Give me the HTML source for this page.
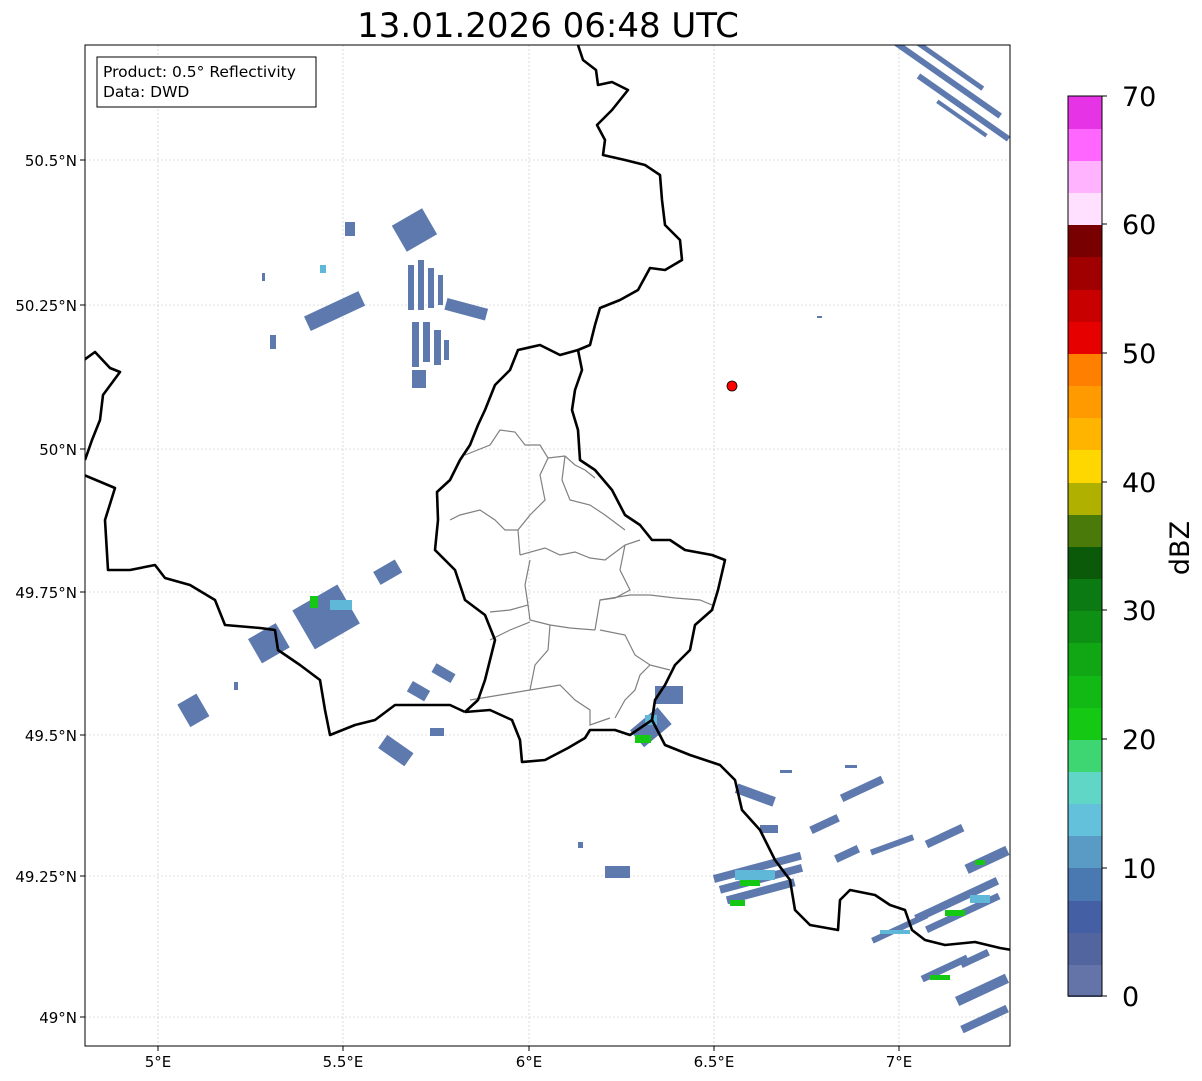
<!DOCTYPE html>
<html><head><meta charset="utf-8"><style>
html,body{margin:0;padding:0;background:#fff;width:1202px;height:1081px;overflow:hidden;font-family:"DejaVu Sans","Liberation Sans",sans-serif;}
</style></head><body>
<svg width="1202" height="1081" xmlns="http://www.w3.org/2000/svg" font-family="DejaVu Sans, Liberation Sans, sans-serif">
<rect width="1202" height="1081" fill="#fff"/>
<text x="548" y="37" font-size="34" text-anchor="middle" fill="#000">13.01.2026 06:48 UTC</text>
<defs><clipPath id="c"><rect x="85" y="45" width="925" height="1001"/></clipPath></defs>
<g clip-path="url(#c)">
<g stroke="#c0c0c0" stroke-width="0.6" stroke-dasharray="2,2">
<line x1="85" x2="1010" y1="160" y2="160"/><line x1="85" x2="1010" y1="305" y2="305"/><line x1="85" x2="1010" y1="449" y2="449"/><line x1="85" x2="1010" y1="592" y2="592"/><line x1="85" x2="1010" y1="735" y2="735"/><line x1="85" x2="1010" y1="876" y2="876"/><line x1="85" x2="1010" y1="1017" y2="1017"/>
<line y1="45" y2="1046" x1="158" x2="158"/><line y1="45" y2="1046" x1="343" x2="343"/><line y1="45" y2="1046" x1="529" x2="529"/><line y1="45" y2="1046" x1="714" x2="714"/><line y1="45" y2="1046" x1="899" x2="899"/>
</g>
<g fill="#5572aa" opacity="0.95">
<g transform="rotate(35 940 80)"><rect x="870" y="72" width="140" height="6"/><rect x="890" y="60" width="90" height="5"/><rect x="920" y="86" width="110" height="6"/><rect x="950" y="97" width="60" height="4"/></g>
<rect x="398" y="215" width="35" height="30" transform="rotate(-30 415 232)"/>
<rect x="345" y="222" width="10" height="14"/>
<rect x="305" y="303" width="60" height="16" transform="rotate(-25 335 312)"/>
<rect x="408" y="265" width="6" height="45"/><rect x="418" y="260" width="6" height="50"/><rect x="428" y="268" width="6" height="40"/><rect x="438" y="275" width="5" height="30"/>
<rect x="445" y="303" width="42" height="12" transform="rotate(15 465 310)"/>
<rect x="412" y="322" width="7" height="45"/><rect x="423" y="322" width="7" height="40"/><rect x="434" y="330" width="7" height="35"/><rect x="444" y="340" width="5" height="20"/>
<rect x="412" y="370" width="14" height="18"/>
<rect x="270" y="335" width="6" height="14"/>
<rect x="262" y="273" width="3" height="8"/>
<rect x="300" y="595" width="52" height="45" transform="rotate(-30 325 617)"/>
<rect x="252" y="630" width="32" height="28" transform="rotate(-30 267 642)"/>
<rect x="375" y="565" width="25" height="15" transform="rotate(-30 387 572)"/>
<rect x="182" y="698" width="22" height="26" transform="rotate(-30 192 710)"/>
<rect x="380" y="742" width="32" height="16" transform="rotate(35 395 750)"/>
<rect x="408" y="685" width="20" height="12" transform="rotate(30 418 692)"/>
<rect x="432" y="668" width="22" height="10" transform="rotate(30 443 674)"/>
<rect x="430" y="728" width="14" height="8"/>
<rect x="234" y="682" width="4" height="8"/>
<rect x="605" y="866" width="25" height="12"/>
<rect x="578" y="842" width="5" height="6"/>
<rect x="655" y="686" width="28" height="18"/>
<rect x="632" y="718" width="36" height="22" transform="rotate(-40 648 727)"/>
<rect x="715" y="863" width="90" height="8" transform="rotate(-15 760 877)"/>
<rect x="718" y="875" width="85" height="8" transform="rotate(-15 760 877)"/>
<rect x="722" y="887" width="70" height="8" transform="rotate(-15 760 877)"/>
<rect x="735" y="790" width="40" height="10" transform="rotate(20 755 796)"/>
<rect x="760" y="825" width="18" height="8"/>
<rect x="810" y="820" width="30" height="8" transform="rotate(-25 825 825)"/>
<rect x="840" y="785" width="45" height="8" transform="rotate(-25 862 790)"/>
<rect x="835" y="850" width="25" height="8" transform="rotate(-25 847 855)"/>
<rect x="870" y="842" width="45" height="6" transform="rotate(-20 892 846)"/>
<rect x="925" y="832" width="40" height="8" transform="rotate(-25 945 837)"/>
<rect x="965" y="855" width="45" height="10" transform="rotate(-25 987 861)"/>
<rect x="870" y="925" width="60" height="6" transform="rotate(-25 900 929)"/>
<rect x="915" y="895" width="90" height="8" transform="rotate(-25 960 907)"/>
<rect x="920" y="910" width="80" height="7" transform="rotate(-25 960 907)"/>
<rect x="920" y="965" width="50" height="7" transform="rotate(-25 945 969)"/>
<rect x="955" y="985" width="55" height="10" transform="rotate(-25 982 991)"/>
<rect x="960" y="1015" width="50" height="8" transform="rotate(-25 985 1020)"/>
<rect x="960" y="955" width="30" height="7" transform="rotate(-25 975 959)"/>
<rect x="817" y="316" width="5" height="2"/>
<rect x="780" y="770" width="12" height="3"/>
<rect x="845" y="765" width="12" height="3"/>
</g>
<g fill="#5fb8d8">
<rect x="330" y="600" width="22" height="10"/><rect x="320" y="265" width="6" height="8"/><rect x="735" y="870" width="40" height="10"/><rect x="645" y="715" width="12" height="10"/><rect x="970" y="895" width="20" height="8"/><rect x="880" y="930" width="30" height="4"/>
</g>
<g fill="#14c814">
<rect x="310" y="596" width="8" height="12"/><rect x="635" y="735" width="16" height="8"/><rect x="730" y="900" width="15" height="6"/><rect x="740" y="880" width="20" height="6"/><rect x="945" y="910" width="20" height="6"/><rect x="930" y="975" width="20" height="5"/><rect x="975" y="860" width="10" height="5"/>
</g>
<g fill="none" stroke="#808080" stroke-width="1.2">
<path d="M465,455 L490,445 L500,430 L515,432 L525,445 L540,445 L548,458 L540,475 L545,500 L530,515 L518,530 L520,555"/>
<path d="M548,458 L565,456 L575,465 L585,470 L595,478"/>
<path d="M565,456 L562,480 L570,500 L590,505 L605,515 L625,530"/>
<path d="M450,520 L460,515 L480,510 L495,520 L505,530 L518,530"/>
<path d="M520,555 L545,548 L560,555 L575,552 L590,558 L605,560 L625,545 L640,540"/>
<path d="M530,560 L525,585 L528,605 L510,610 L490,612"/>
<path d="M625,545 L620,570 L630,590 L615,598 L600,600 L595,630"/>
<path d="M595,630 L570,628 L550,625 L530,620 L528,605"/>
<path d="M600,600 L630,595 L650,595 L675,598 L700,600 L712,605"/>
<path d="M490,640 L510,630 L530,622"/>
<path d="M550,625 L548,650 L535,665 L530,690"/>
<path d="M600,630 L625,635 L635,655 L650,665 L670,670"/>
<path d="M470,700 L500,695 L530,690 L560,685 L575,700 L590,710 L590,725 L610,718"/>
<path d="M650,665 L640,675 L635,690 L625,700 L615,718"/>
</g>
<g fill="none" stroke="#000" stroke-width="2.6" stroke-linejoin="round">
<path d="M578,45 L583,60 L596,70 L598,85 L612,82 L628,90 L612,110 L597,125 L605,140 L603,155 L625,160 L645,165 L660,175 L662,200 L665,225 L680,240 L682,260 L665,270 L650,268 L638,290 L620,300 L600,308 L595,325 L590,345 L578,350 L582,370 L575,390 L572,410 L578,430 L580,460 L595,470 L612,490 L625,515 L640,525 L652,540 L670,540 L685,550 L712,555 L725,560 L718,590 L712,610 L695,625 L690,650 L675,665 L665,685 L655,700 L652,720 L665,745 L690,755 L720,765 L735,780 L742,810 L760,830 L775,860 L790,880 L795,910 L810,925 L838,930 L840,900 L850,890 L875,895 L890,905 L905,910 L912,930 L925,940 L945,945 L975,942 L1000,948 L1012,950"/>
<path d="M578,350 L560,355 L540,345 L518,350 L510,370 L495,385 L485,410 L478,425 L470,445 L460,460 L450,480 L437,492 L438,520 L435,550 L455,570 L465,600 L485,615 L495,640 L490,660 L485,680 L478,700 L465,712"/>
<path d="M465,712 L490,710 L512,720 L520,740 L522,762 L545,760 L568,748 L585,738 L590,730 L615,730 L630,735 L652,720"/>
<path d="M84,475 L115,488 L105,520 L108,570 L130,570 L155,565 L165,578 L190,585 L215,600 L225,625 L260,628 L275,630 L278,650 L300,665 L320,680 L325,710 L330,735 L355,725 L375,720 L395,705 L420,705 L450,705 L465,712"/>
<path d="M84,360 L95,352 L110,368 L120,372 L103,395 L100,420 L92,440 L85,460"/>
</g>
<circle cx="732" cy="386" r="5" fill="#f00" stroke="#000" stroke-width="0.8"/>
</g>
<rect x="85" y="45" width="925" height="1001" fill="none" stroke="#000" stroke-width="1"/>
<g stroke="#000" stroke-width="1">
<line x1="80" x2="85" y1="160" y2="160"/><line x1="80" x2="85" y1="305" y2="305"/><line x1="80" x2="85" y1="449" y2="449"/><line x1="80" x2="85" y1="592" y2="592"/><line x1="80" x2="85" y1="735" y2="735"/><line x1="80" x2="85" y1="876" y2="876"/><line x1="80" x2="85" y1="1017" y2="1017"/>
<line y1="1046" y2="1051" x1="158" x2="158"/><line y1="1046" y2="1051" x1="343" x2="343"/><line y1="1046" y2="1051" x1="529" x2="529"/><line y1="1046" y2="1051" x1="714" x2="714"/><line y1="1046" y2="1051" x1="899" x2="899"/>
</g>
<rect x="97" y="57" width="219" height="50" fill="#fff" stroke="#000" stroke-width="1"/>
<text x="103" y="77" font-size="15.5">Product: 0.5° Reflectivity</text>
<text x="103" y="97" font-size="15.5">Data: DWD</text>
<g font-size="15" text-anchor="end">
<text x="77" y="166">50.5°N</text><text x="77" y="311">50.25°N</text><text x="77" y="455">50°N</text><text x="77" y="598">49.75°N</text><text x="77" y="741">49.5°N</text><text x="77" y="882">49.25°N</text><text x="77" y="1023">49°N</text>
</g>
<g font-size="15" text-anchor="middle">
<text x="158" y="1067">5°E</text><text x="343" y="1067">5.5°E</text><text x="529" y="1067">6°E</text><text x="714" y="1067">6.5°E</text><text x="899" y="1067">7°E</text>
</g>
<g>
<rect x="1068" y="964" width="34" height="33" fill="#6474a8"/>
<rect x="1068" y="932" width="34" height="33" fill="#52659e"/>
<rect x="1068" y="900" width="34" height="33" fill="#445fa3"/>
<rect x="1068" y="868" width="34" height="33" fill="#4a78b0"/>
<rect x="1068" y="835" width="34" height="33" fill="#5a9bc6"/>
<rect x="1068" y="803" width="34" height="33" fill="#63c1dc"/>
<rect x="1068" y="771" width="34" height="33" fill="#5fd6c6"/>
<rect x="1068" y="739" width="34" height="33" fill="#3ed672"/>
<rect x="1068" y="707" width="34" height="33" fill="#14c814"/>
<rect x="1068" y="675" width="34" height="33" fill="#12b814"/>
<rect x="1068" y="643" width="34" height="33" fill="#10a614"/>
<rect x="1068" y="610" width="34" height="33" fill="#0e9014"/>
<rect x="1068" y="578" width="34" height="33" fill="#0c7a12"/>
<rect x="1068" y="546" width="34" height="33" fill="#0a5a0a"/>
<rect x="1068" y="514" width="34" height="33" fill="#4a7a0a"/>
<rect x="1068" y="482" width="34" height="33" fill="#b0b000"/>
<rect x="1068" y="450" width="34" height="33" fill="#ffd700"/>
<rect x="1068" y="417" width="34" height="33" fill="#ffb400"/>
<rect x="1068" y="385" width="34" height="33" fill="#ff9a00"/>
<rect x="1068" y="353" width="34" height="33" fill="#ff8000"/>
<rect x="1068" y="321" width="34" height="33" fill="#e60000"/>
<rect x="1068" y="289" width="34" height="33" fill="#c80000"/>
<rect x="1068" y="257" width="34" height="33" fill="#a00000"/>
<rect x="1068" y="224" width="34" height="33" fill="#780000"/>
<rect x="1068" y="192" width="34" height="33" fill="#ffe0ff"/>
<rect x="1068" y="160" width="34" height="33" fill="#ffb3ff"/>
<rect x="1068" y="128" width="34" height="33" fill="#ff66ff"/>
<rect x="1068" y="96" width="34" height="33" fill="#e633e6"/>
<rect x="1068" y="96" width="34" height="900" fill="none" stroke="#000" stroke-width="1"/>
</g>
<g stroke="#000" stroke-width="1">
<line x1="1102" x2="1107" y1="996" y2="996"/><line x1="1102" x2="1107" y1="868" y2="868"/><line x1="1102" x2="1107" y1="739" y2="739"/><line x1="1102" x2="1107" y1="610" y2="610"/><line x1="1102" x2="1107" y1="482" y2="482"/><line x1="1102" x2="1107" y1="353" y2="353"/><line x1="1102" x2="1107" y1="224" y2="224"/><line x1="1102" x2="1107" y1="96" y2="96"/>
</g>
<g font-size="27">
<text x="1122" y="1006">0</text><text x="1122" y="878">10</text><text x="1122" y="749">20</text><text x="1122" y="620">30</text><text x="1122" y="492">40</text><text x="1122" y="363">50</text><text x="1122" y="234">60</text><text x="1122" y="106">70</text>
</g>
<text transform="translate(1189,548) rotate(-90)" font-size="27" text-anchor="middle">dBZ</text>
</svg>
</body></html>
